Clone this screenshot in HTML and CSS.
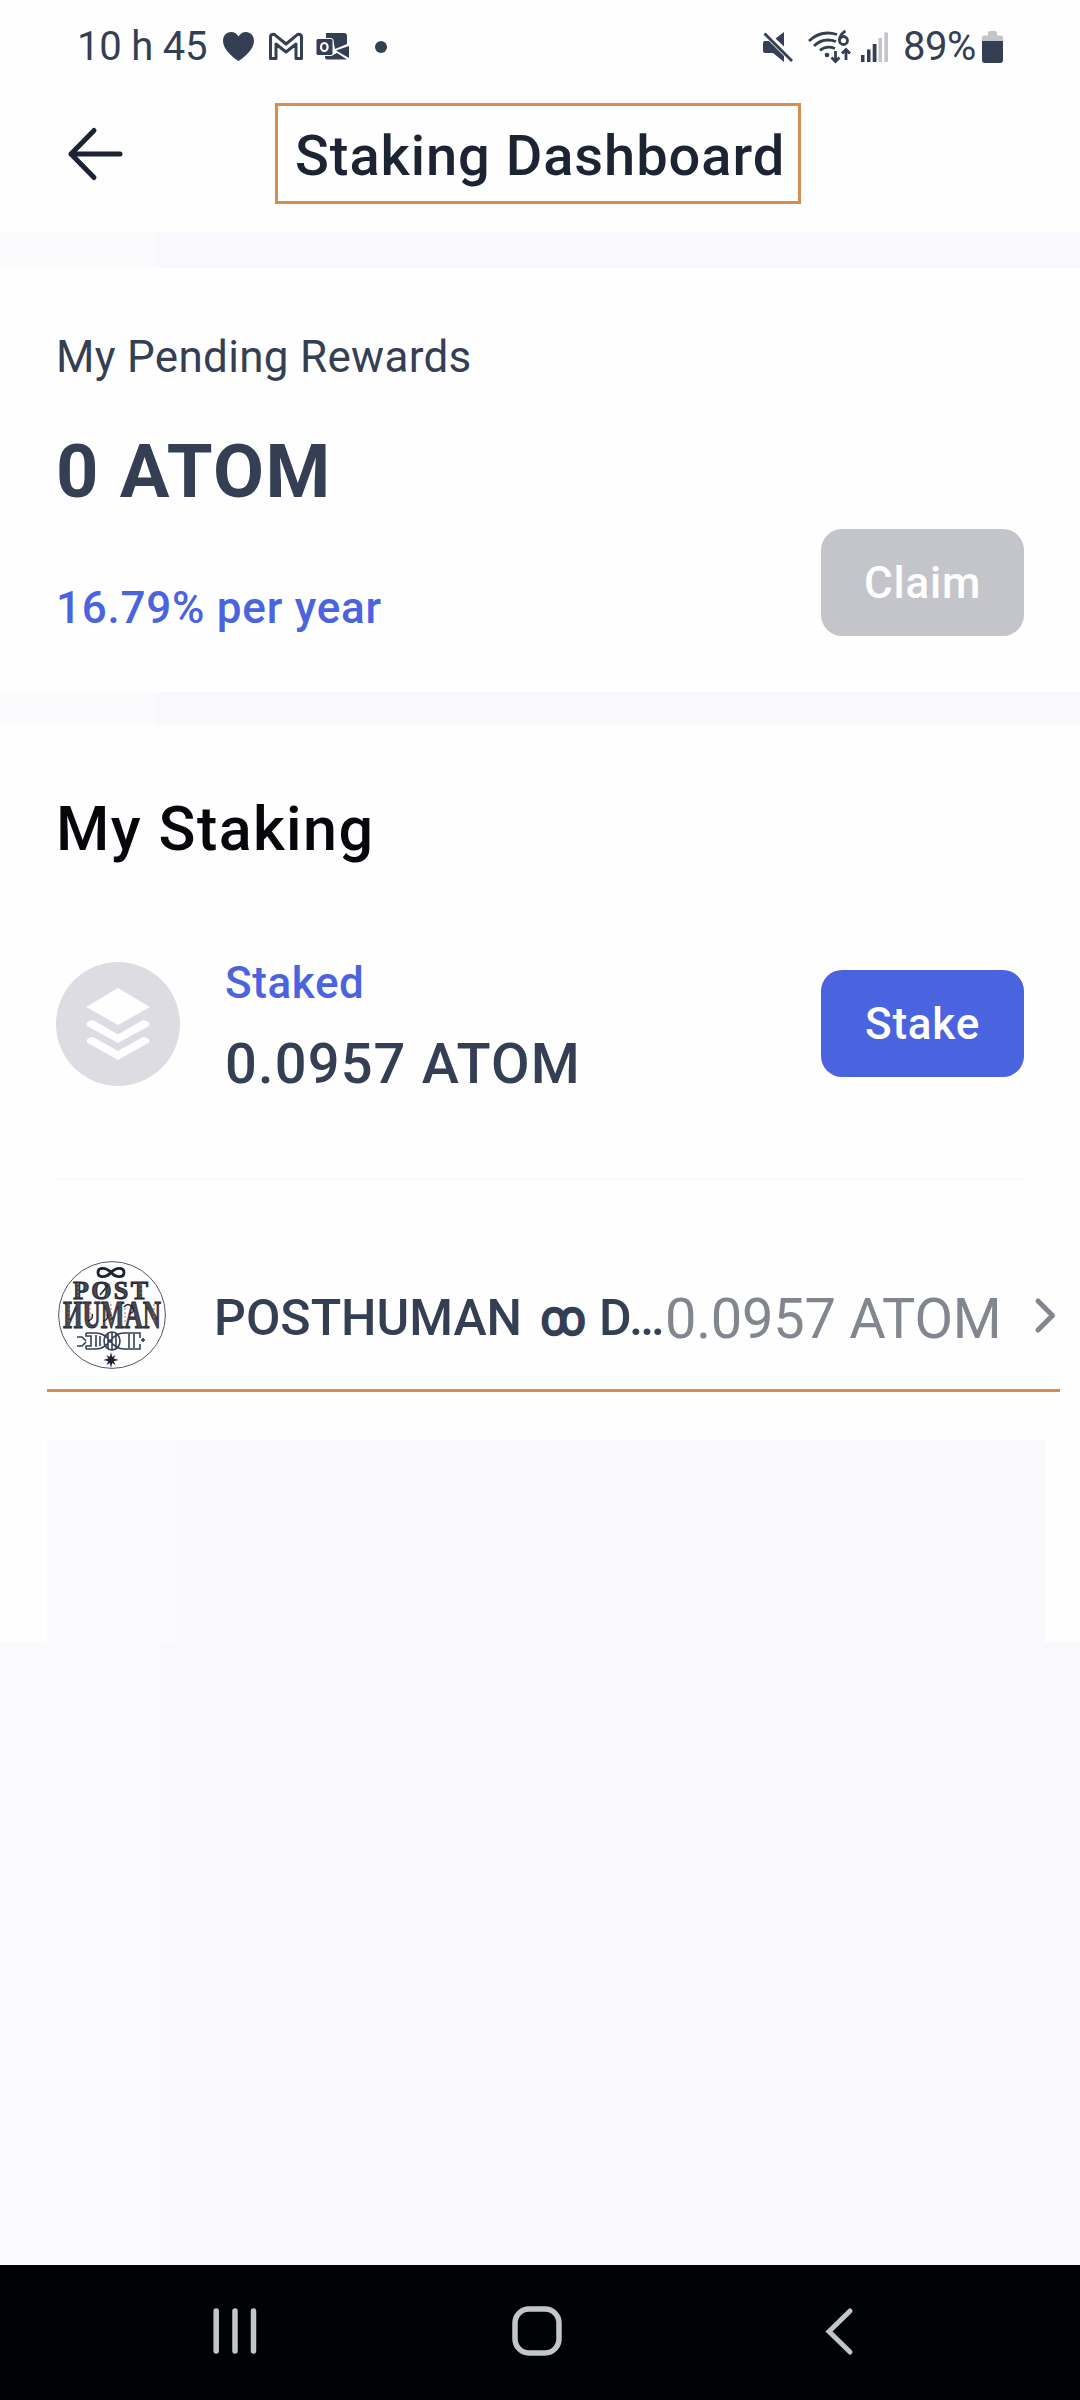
FILE: index.html
```html
<!DOCTYPE html>
<html lang="en">
<head>
<meta charset="utf-8">
<title>Staking Dashboard</title>
<link rel="stylesheet" href="styles.css">
</head>
<body>
<div class="screen">
  <div class="status">
    <span class="clock">10 h 45</span>
    <svg class="ic-heart" width="31" height="29" viewBox="0 0 31 29"><path fill="#353f54" d="M15.500 29C11 26 0 18 0 9 0 3.500 3.500 0 8 0c3.500 0 6 1.800 7.500 4.500C17 1.800 19.500 0 23 0c4.500 0 8 3.500 8 9 0 9-11 17-15.500 20z"/></svg>
    <svg class="ic-mail" width="34" height="27" viewBox="0 0 34 27"><path fill="none" stroke="#353f54" stroke-width="3" stroke-linejoin="round" d="M1.500 25.500V4C1.500 1.500 4.500.5 6.500 2.300L17 11 27.500 2.300C29.500.5 32.500 1.500 32.500 4v21.500h-5.500V11L17 19 7 11v14.500z"/></svg>
    <svg class="ic-outlook" width="34" height="27" viewBox="0 0 34 27"><path fill="#353f54" d="M10 0h18q3 0 3 3v8l-12 5-2-10h-7zM33 13v12L20 17.500zM9 23h6l6-3 10 6.500H11q-2 0-2-3.500z"/><rect x="0" y="5.500" width="17" height="17" rx="2" fill="#353f54" stroke="#fefefe" stroke-width="1"/><ellipse cx="8.300" cy="14" rx="3.300" ry="4" fill="none" stroke="#fefefe" stroke-width="2.200"/></svg>
    <span class="dot"></span>
    <span class="fill"></span>
    <svg class="ic-mute" width="30" height="30" viewBox="0 0 30 30"><path fill="#353f54" d="M0 11q0-2 2-2h4l15 15v6L10 21H2q-2 0-2-2zM12.500 6.500 21 0v14.500z"/><path stroke="#353f54" stroke-width="2.800" d="M1.500 1.500 29 29"/></svg>
    <svg class="ic-wifi" width="44" height="33" viewBox="0 0 44 33"><g fill="none" stroke="#353f54" stroke-width="2.800"><path d="M1 11Q13-.5 29 4.500M6 16Q15 7 28 11.500M12 20.500Q18 15 27 18.500"/><path d="M27.500 21v10M23.500 27.500l4 4 4-4M38 30V20M34 23.500l4-4 4 4"/><circle cx="35.500" cy="10.500" r="4"/><path d="M31.500 10Q32 4 37.500 1"/></g><circle cx="19" cy="25" r="2.300" fill="#353f54"/></svg>
    <svg class="ic-signal" width="27" height="30" viewBox="0 0 27 30"><path fill="#353f54" d="M0 23h3.500v7H0zM6 17.500h3.500V30H6zM11.700 12h3.800v18h-3.800z"/><path fill="#c4c5cb" d="M17.500 6h3.500v24h-3.500zM23.300 1.500q0-1.500 1.850-1.500T27 1.500V30h-3.700z"/></svg>
    <span class="percent">89%</span>
    <svg class="ic-battery" width="21" height="32" viewBox="0 0 21 32"><path fill="#c4c5cb" d="M0 10V6.500Q0 4.500 2 4.500h4V2q0-2 2-2h5q2 0 2 2v2.500h4q2 0 2 2V10z"/><path fill="#353f54" d="M0 10h21v19q0 3-3 3H3q-3 0-3-3z"/></svg>
  </div>

  <header class="appbar">
    <svg class="back" width="54" height="52" viewBox="0 0 54 52"><path fill="none" stroke="#1c2333" stroke-width="5" stroke-linecap="round" stroke-linejoin="round" d="M26 2.500 3 26l23 23.500M3 26h49"/></svg>
    <h1 class="title">Staking Dashboard</h1>
  </header>

  <div class="band band-top"></div>

  <section class="rewards">
    <div class="label">My Pending Rewards</div>
    <div class="value">0 ATOM</div>
    <div class="rewards-foot">
      <span class="rate">16.79% per year</span>
      <button class="btn btn-off">Claim</button>
    </div>
  </section>

  <div class="band band-mid"></div>

  <section class="staking">
    <h2 class="heading">My Staking</h2>
    <div class="staked">
      <svg class="stack" width="124" height="124" viewBox="0 0 124 124"><circle cx="62" cy="62" r="62" fill="#dcdce2"/><g fill="#fefefe"><path d="M62 26 94 45 62 63 30 45z"/><path d="M37 58 62 72.500 87 58Q95 59 93 64L62 81 31 64Q29 59 37 58z"/><path d="M37 75 62 89 87 75Q95 76 93 80.500L62 98 31 80.500Q29 76 37 75z"/></g></svg>
      <div class="staked-text">
        <span class="staked-label">Staked</span>
        <span class="staked-amount">0.0957 ATOM</span>
      </div>
      <button class="btn btn-on">Stake</button>
    </div>
    <div class="divider"></div>
    <div class="validator">
      <svg class="avatar" width="108" height="108" viewBox="0 0 108 108">
        <circle cx="54" cy="54" r="53.400" fill="#fefefe" stroke="#4c566b" stroke-width="1"/>
        <path fill="none" stroke="#1c2333" stroke-width="2.800" d="M53 11.500C48 6 40 6 40 11.500S48 17 53 11.500 66 6 66 11.500 58 17 53 11.500z"/>
        <g class="logo-text" fill="#4a4750" stroke="#1c2333" stroke-width="1">
          <text x="15" y="37.500" font-size="26" textLength="75" lengthAdjust="spacing">POST</text>
          <text x="5" y="67" font-size="39" textLength="98" lengthAdjust="spacingAndGlyphs">ИUMAN</text>
        </g>
        <path fill="none" stroke="#c4763c" stroke-width="1" stroke-dasharray="2 2" d="M20 22v13M45 31l6-7M83 23v13M11 43v20M32 43v14M53 43v20M67 47v15M96 43v20"/>
        <path fill="none" stroke="#1c2333" stroke-width="1.500" d="M42 34l9-11M30 60q6-2 4-7M45 60q6-1 4-7M66 46q4-5 8 0t-3 7"/>
        <g fill="none" stroke="#353f54" stroke-width="1.600">
          <path d="M28 72h10q8 0 14 8t14 8h16v-5M28 88h10q8 0 14-8t14-8h16v5M28 72v3h5v10h-5v3M19 76h5l4 4M19 85h5l4-4M85 77v4M83 79h4M71 73v14M76 73v14M38 74v12M42 75v10M50 72v16M54 71v18M58 72v16"/>
          <ellipse cx="54" cy="80" rx="8" ry="9"/>
        </g>
        <path fill="#1c2333" d="M53 91l1.200 5 3.300-2-1.800 3.600 5 1.400-5 1.300 1.800 3.700-3.300-2.100L53 107l-1.200-5.100-3.300 2.100 1.800-3.700-5-1.300 5-1.400-1.800-3.600 3.300 2z"/>
      </svg>
      <span class="validator-name">POSTHUMAN <span class="oo">ꝏ</span> D…</span>
      <span class="validator-amount">0.0957 ATOM</span>
      <svg class="chevron" width="21" height="35" viewBox="0 0 21 35"><path fill="none" stroke="#82868f" stroke-width="5" stroke-linecap="round" stroke-linejoin="round" d="M3 3 17.500 17.500 3 32"/></svg>
    </div>
    <div class="underline"></div>
  </section>

  <div class="panel-wrap"><div class="panel"></div></div>
  <div class="rest"></div>

  <nav class="navbar">
    <svg class="nav-recents" width="44" height="46" viewBox="0 0 44 46"><path stroke="#c4c5cb" stroke-width="5.500" stroke-linecap="round" d="M3.200 3v40M22 3v40M40.500 3v40"/></svg>
    <svg class="nav-home" width="50" height="50" viewBox="0 0 50 50"><rect x="3" y="3" width="44" height="44" rx="14" fill="none" stroke="#c4c5cb" stroke-width="5.500"/></svg>
    <svg class="nav-back" width="28" height="47" viewBox="0 0 28 47"><path fill="none" stroke="#c4c5cb" stroke-width="5" stroke-linecap="round" d="M25 3 4 23.500 25 44"/></svg>
  </nav>
</div>
</body>
</html>
```

FILE: styles.css
```css
* { box-sizing: border-box; }

body {
  margin: 0;
  background: #fefefe;
  color: #353f54;
  font-family: Roboto, "Noto Sans", sans-serif;
}

svg { display: block; flex: none; overflow: visible; }

.screen {
  width: 1080px;
  height: 2400px;
  display: flex;
  flex-direction: column;
  overflow: hidden;
}

/* Status bar */
.status {
  display: flex;
  align-items: center;
  height: 88px;
  padding: 5px 77px 0 77px;
  font-size: 40px;
  line-height: 40px;
  white-space: nowrap;
}
.clock { width: 146px; letter-spacing: -0.2px; }
.ic-mail { margin-left: 15px; }
.ic-outlook { margin-left: 13px; }
.dot { width: 12px; height: 12px; margin-left: 25px; border-radius: 50%; background: #353f54; }
.fill { flex: 1; }
.ic-wifi { margin-left: 15px; }
.ic-signal { margin-left: 9px; }
.percent { width: 79px; margin-left: 15px; letter-spacing: -0.5px; }

/* App bar */
.appbar {
  display: flex;
  align-items: center;
  height: 144px;
  padding: 0 0 13px 68px;
}
.title {
  width: 526px;
  height: 101px;
  margin: 0 0 0 153px;
  padding: 0 0 0 17px;
  border: 3px solid #d88d50;
  color: #1c2333;
  font-size: 56px;
  font-weight: 500;
  line-height: 100px;
  letter-spacing: 0.95px;
  white-space: nowrap;
}

.band { background: linear-gradient(90deg, #fbfbfe 156px, #f9f9fd 156px); }
.band-top { height: 36px; }
.band-mid { height: 33px; }

/* Rewards */
.rewards { height: 424px; padding: 59px 56px 0; }
.label { font-size: 44px; line-height: 60px; letter-spacing: 0.3px; }
.value { margin-top: 40px; font-size: 74px; font-weight: 700; line-height: 90px; letter-spacing: 1.5px; }
.rewards-foot { display: flex; justify-content: space-between; align-items: flex-end; margin-top: 12px; }
.rate { color: #4a63df; font-size: 44px; font-weight: 500; line-height: 56px; letter-spacing: 0.75px; }

.btn {
  width: 203px;
  height: 107px;
  padding: 1px 0 0;
  border: 0;
  border-radius: 21px;
  color: #fefefe;
  font: 500 44px/106px Roboto, sans-serif;
  letter-spacing: 0.8px;
}
.btn-off { background: #c4c5cb; }
.btn-on { margin-bottom: 1px; background: #4a63df; }

/* Staking */
.staking { height: 715px; padding-top: 64px; }
.heading { margin: 0 56px; color: #05070b; font-size: 61px; font-weight: 500; line-height: 80px; letter-spacing: 1.400px; }
.staked { display: flex; align-items: center; height: 124px; margin: 93px 56px 0; }
.staked-text { display: flex; flex: 1; flex-direction: column; gap: 34px; padding: 2px 0 0 45px; }
.staked-label { color: #4a63df; font-size: 44px; font-weight: 500; line-height: 44px; letter-spacing: 0.6px; }
.staked-amount { font-size: 56px; font-weight: 500; line-height: 50px; letter-spacing: 1.150px; }
.divider { height: 3px; margin: 92px 56px 0; background: #f9f9fd; }

.validator { display: flex; align-items: center; height: 108px; margin: 80px 0 0 58px; white-space: nowrap; }
.validator-name { width: 450px; padding: 6px 0 0 48px; font-size: 50px; font-weight: 500; line-height: 60px; }
.oo { display: inline-block; margin-left: 1.500px; transform: scaleX(0.92); transform-origin: right; -webkit-text-stroke: 1.500px #353f54; }
.validator-amount { width: 370px; margin-left: 49px; padding-top: 7px; color: #82868f; font-size: 56px; line-height: 60px; letter-spacing: -0.250px; }
.logo-text { font-family: "Liberation Serif", serif; font-weight: 700; }
.underline { height: 3px; margin: 20px 20px 0 47px; background: #d88d50; }

.panel-wrap { height: 202px; padding: 0 35px 0 47px; }
.panel { height: 100%; background: linear-gradient(90deg, #fbfbfe 130px, #f9f9fd 130px); }
.rest { flex: 1; background: linear-gradient(90deg, #fbfbfe 160px, #f9f9fd 160px); }

/* System navigation */
.navbar { display: flex; align-items: center; height: 135px; padding: 0 0 3px 213px; background: #000103; }
.nav-home { margin-left: 255px; }
.nav-back { margin-left: 263px; }
```
